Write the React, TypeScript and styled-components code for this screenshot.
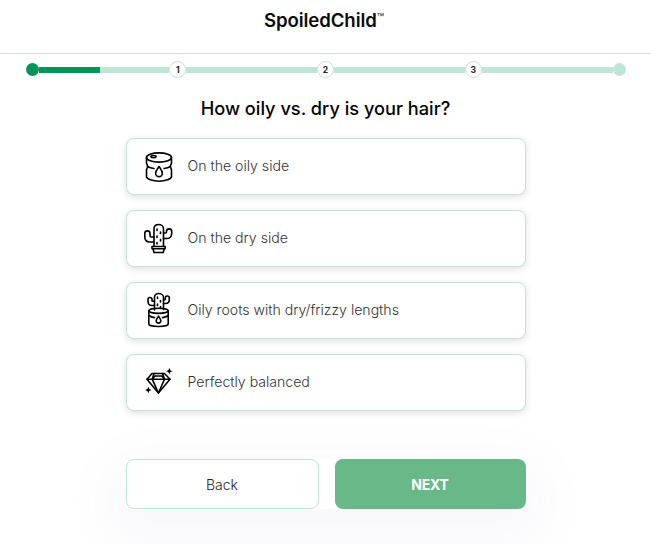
import React from 'react'
import styled, { createGlobalStyle } from 'styled-components'

const GlobalStyle = createGlobalStyle`
    html, body {
        margin: 0;
        padding: 0;
        background: #fff;
        font-family: Inter, "Liberation Sans", sans-serif;
    }
`

const BarrelIcon = () => (
    <Svg viewBox="0 0 30 30">
        <ellipse cx="15" cy="5.5" rx="12.5" ry="4.6" />
        <ellipse cx="9.5" cy="4.6" rx="2.6" ry="1.1" />
        <path d="M2.5 5.5V11C2.5 12 3.6 13 3.6 14.5S2.5 17 2.5 18V24.5C2.5 27 8.5 29.2 15 29.2S27.5 27 27.5 24.5V18C27.5 17 26.4 16 26.4 14.5S27.5 12 27.5 11V5.5" />
        <path d="M3.6 14.5C5.5 15.6 8 16.2 10 16.5M26.4 14.5C24.5 15.6 22 16.2 20 16.5" />
        <path d="M15 14.5C13 17.5 11.6 19.2 11.6 21.2A3.4 3.4 0 0 0 18.4 21.2C18.4 19.2 17 17.5 15 14.5Z" />
    </Svg>
)

const CactusIcon = () => (
    <Svg viewBox="0 0 30 30">
        <path d="M10 18H5.5C2.5 18 .8 16 .8 13V9.5C.8 6 6 6 6 9.5V11.5C6 12.5 6.5 13 7.5 13H10" />
        <path d="M10 22V5C10 1.8 12.5 .5 14.7 .5S19.5 1.8 19.5 5V22" />
        <path d="M19.5 9H21.5C22.2 9 22.5 8.5 22.5 8V7.5C22.5 4 27.7 4 27.7 7.5V9.5C27.7 12.5 25.5 14.5 23 14.5H19.5" />
        <path d="M8 22.5H21.2V24.8H8ZM9 24.8L10 28.5H19.2L20.2 24.8" />
        <path d="M13 5V6.5M16.5 8V9.5M13 12V13.5M16.5 15.5V17M13 18.5V20" />
    </Svg>
)

const MixedIcon = () => (
    <Svg viewBox="0 0 30 30">
        <path d="M10.5 9.5H8C5.5 9.5 4 8 4 5.5V3.5C4 .8 8 .8 8 3.5V4.5C8 5 8.4 5.3 9 5.3H10.5" />
        <path d="M10.5 14V1.5C10.5 -1 12.5 -2.5 14.7 -2.5S19.5 -1 19.5 1.5V13.5" />
        <path d="M19.5 7.5H21.5C23.8 7.5 25.3 6 25.3 3.5V2C25.3 -.6 21.3 -.6 21.3 2V3C21.3 3.6 21 4 20.5 4H19.5" />
        <path d="M13.5 1V2.5M16.5 4.5V6M13.5 8V9.5M16.5 10.5V12" />
        <ellipse cx="14.5" cy="14.8" rx="9.7" ry="2.6" />
        <path d="M4.8 14.8V28C4.8 29.5 9.5 30.5 14.5 30.5S24.2 29.5 24.2 28V14.8" />
        <path d="M4.8 19.5C7 21 9 21.4 10.5 21.6M24.2 19.5C22 21 20 21.4 18.5 21.6" />
        <path d="M14.5 20.2C13.2 22.2 12.2 23.4 12.2 24.8A2.3 2.3 0 0 0 16.8 24.8C16.8 23.4 15.8 22.2 14.5 20.2Z" />
    </Svg>
)

const DiamondIcon = () => (
    <Svg viewBox="0 0 30 30">
        <path d="M8 5.5H20.5L26 11.2L14.4 25L3 11.2Z" />
        <path d="M3 11.2H26M10 5.5L8.2 11.2L14.4 25L20.5 11.2L18.6 5.5M8.2 11.2L11 8H17.8L20.5 11.2" />
        <Sparkle d="M25.3 0L26.3 2.3L28.6 3.2L26.3 4.1L25.3 6.4L24.3 4.1L22 3.2L24.3 2.3Z" />
        <Sparkle d="M4.3 18.8L5.3 21.1L7.6 22L5.3 22.9L4.3 25.2L3.3 22.9L1 22L3.3 21.1Z" />
    </Svg>
)

const OPTIONS = [
    { label: 'On the oily side', icon: <BarrelIcon /> },
    { label: 'On the dry side', icon: <CactusIcon /> },
    { label: 'Oily roots with dry/frizzy lengths', icon: <MixedIcon /> },
    { label: 'Perfectly balanced', icon: <DiamondIcon /> },
]

const App = () => {
    return (
        <Page>
            <GlobalStyle />
            <Header>
                <Logo>
                    SpoiledChild<Tm>™</Tm>
                </Logo>
            </Header>
            <Progress>
                <EndDot $done />
                <Segment>
                    <SegmentFill $width={61} />
                </Segment>
                <Step>1</Step>
                <Segment />
                <Step>2</Step>
                <Segment />
                <Step>3</Step>
                <Segment />
                <EndDot />
            </Progress>
            <Question>How oily vs. dry is your hair?</Question>
            <Options>
                {OPTIONS.map((option) => (
                    <Option key={option.label}>
                        <IconSlot>{option.icon}</IconSlot>
                        <OptionLabel>{option.label}</OptionLabel>
                    </Option>
                ))}
            </Options>
            <Actions>
                <BackButton>Back</BackButton>
                <NextButton>NEXT</NextButton>
            </Actions>
        </Page>
    )
}

const Page = styled.div`
    width: 651px;
    height: 544px;
    overflow: hidden;
    display: flex;
    flex-direction: column;
    align-items: center;
    background: #fff;
`
const Header = styled.header`
    width: 100%;
    height: 53px;
    flex-shrink: 0;
    display: flex;
    justify-content: center;
    border-bottom: 1px solid #dcdcdc;
`
const Logo = styled.div`
    margin: 9px 0 0 -3px;
    font-size: 18.6px;
    line-height: 22px;
    font-weight: 600;
    color: #0b0b0b;
    letter-spacing: -0.1px;
`
const Tm = styled.sup`
    font-size: 12px;
    font-weight: 400;
    line-height: 0;
    vertical-align: 5px;
    color: #333;
`
const Progress = styled.div`
    width: 600px;
    height: 17px;
    margin-top: 7px;
    display: flex;
    align-items: center;
`
const EndDot = styled.span<{ $done?: boolean }>`
    width: 13px;
    height: 13px;
    flex-shrink: 0;
    border-radius: 50%;
    background: ${(p) => (p.$done ? '#00965a' : '#bfe5d5')};
`
const Segment = styled.span`
    flex: 1;
    height: 6px;
    background: #bfe5d5;
`
const SegmentFill = styled.span<{ $width: number }>`
    display: block;
    width: ${(p) => p.$width}px;
    height: 100%;
    background: #00965a;
`
const Step = styled.span`
    width: 17px;
    height: 17px;
    box-sizing: border-box;
    flex-shrink: 0;
    display: flex;
    align-items: center;
    justify-content: center;
    border: 1px solid #bfe5d5;
    border-radius: 50%;
    background: #fff;
    color: #222;
    font-size: 8.5px;
    font-weight: 700;
`
const Question = styled.h1`
    margin: 18px 0 0;
    font-size: 18.2px;
    line-height: 24px;
    font-weight: 450;
    color: #000;
`
const Options = styled.div`
    width: 400px;
    margin-top: 18px;
    display: flex;
    flex-direction: column;
    gap: 15px;
`
const Option = styled.div`
    height: 57px;
    box-sizing: border-box;
    display: flex;
    align-items: center;
    gap: 14px;
    padding-left: 17px;
    border: 1px solid #bfe5d5;
    border-radius: 8px;
    background: #fff;
    box-shadow: 0 2px 7px rgba(0, 0, 0, 0.13);
`
const OptionLabel = styled.span`
    margin-bottom: 2px;
    color: #333;
    font-size: 14.1px;
    font-weight: 300;
`
const IconSlot = styled.span`
    width: 30px;
    height: 30px;
    display: flex;
    flex-shrink: 0;
`
const Svg = styled.svg`
    width: 30px;
    height: 30px;
    fill: none;
    stroke: #000;
    stroke-width: 1.6;
    stroke-linecap: round;
    stroke-linejoin: round;
    overflow: visible;
`
const Sparkle = styled.path`
    fill: #000;
    stroke: none;
`
const Actions = styled.div`
    width: 400px;
    margin-top: 48px;
    display: flex;
    gap: 16px;
    box-shadow: 0 18px 50px 16px rgba(120, 110, 200, 0.05);
    border-radius: 8px;
`
const ButtonBase = styled.button`
    flex: 1;
    height: 50px;
    box-sizing: border-box;
    border-radius: 8px;
    font-family: inherit;
    font-size: 14px;
    cursor: pointer;
`
const BackButton = styled(ButtonBase)`
    border: 1px solid #bfe5d5;
    background: #fff;
    color: #222;
    font-weight: 300;
`
const NextButton = styled(ButtonBase)`
    border: none;
    background: #69b888;
    color: #fff;
    font-weight: 700;
    letter-spacing: -0.2px;
`

export default App
